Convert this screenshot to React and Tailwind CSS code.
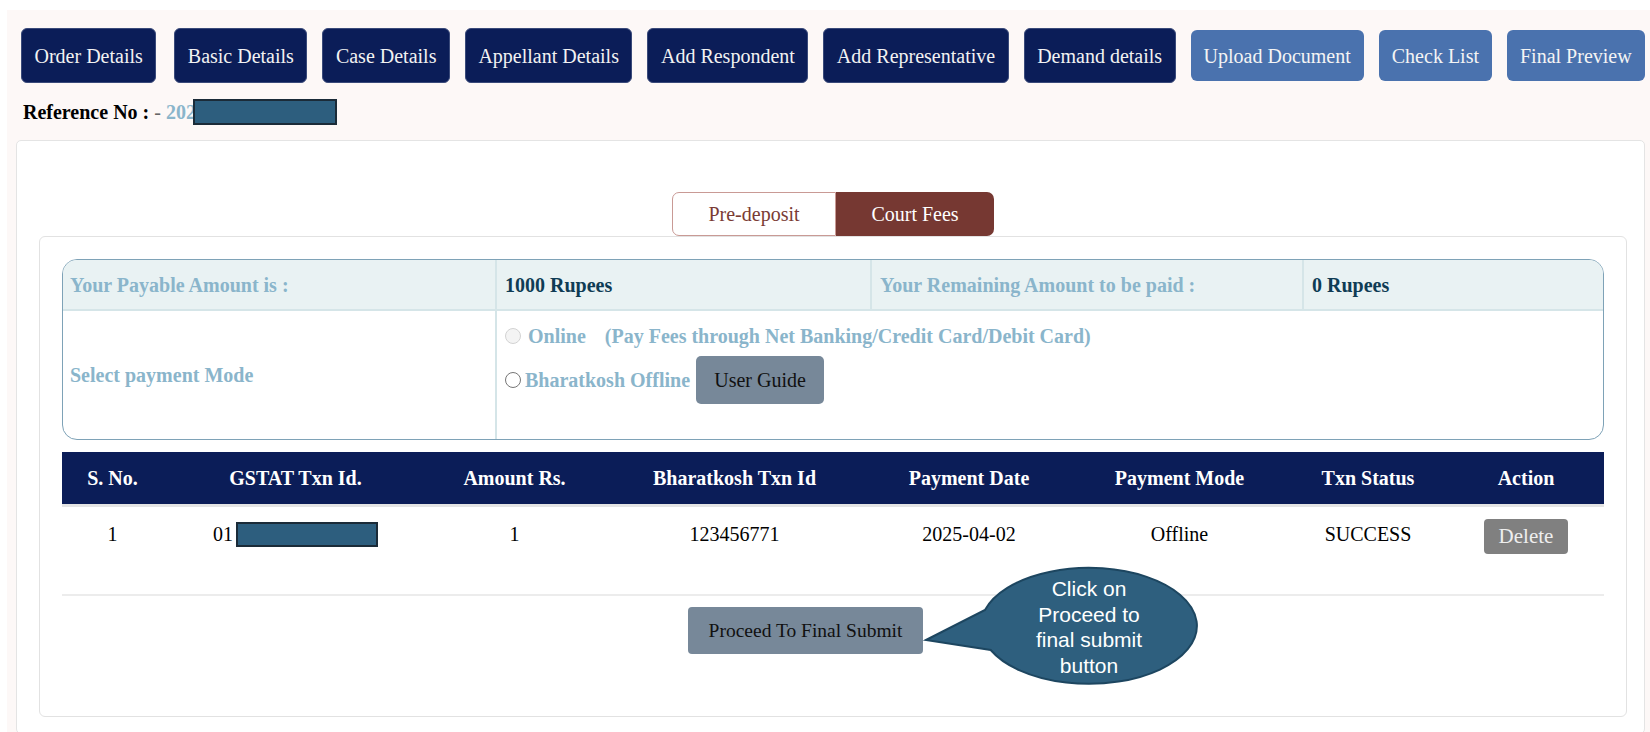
import React from "react";

const navDark = [
  "Order Details",
  "Basic Details",
  "Case Details",
  "Appellant Details",
  "Add Respondent",
  "Add Representative",
  "Demand details",
];
const navLight = ["Upload Document", "Check List", "Final Preview"];

const headers = [
  "S. No.",
  "GSTAT Txn Id.",
  "Amount Rs.",
  "Bharatkosh Txn Id",
  "Payment Date",
  "Payment Mode",
  "Txn Status",
  "Action",
];

function Redact({ w, h, className = "" }) {
  return (
    <span
      className={`inline-block bg-[#2d5e7e] border-2 border-[#1b2b38] align-middle ${className}`}
      style={{ width: w, height: h }}
    />
  );
}

export default function App() {
  return (
    <div className="min-h-screen bg-white pt-[10px] pl-[7px] font-['Liberation_Serif','Times_New_Roman',serif] text-[20px] text-black">
      <div className="bg-[#fdf8f7] pt-[18px] pl-[9px] pr-[5px] h-[722px] overflow-hidden">
        {/* Nav */}
        <div className="flex items-center gap-[15px] pl-[5px]">
          {navDark.map((t, i) => (
            <div
              key={t}
              className={`h-[55px] px-[12.5px] flex items-center rounded-[6px] bg-[#0b1d58] text-[#f2f2f2] whitespace-nowrap border border-[#3a4a7a] ${i === 1 ? "ml-[3px]" : ""}`}
            >
              {t}
            </div>
          ))}
          {navLight.map((t) => (
            <div
              key={t}
              className="h-[51px] px-[13px] flex items-center rounded-[6px] bg-[#4a72ae] text-[#f4f4f4] whitespace-nowrap"
            >
              {t}
            </div>
          ))}
        </div>

        {/* Reference */}
        <div className="mt-[13px] h-[32px] pl-[7px] flex items-center text-[20px]">
          <span className="font-bold">Reference No :</span>
          <span className="ml-[5px] text-[#666]">-</span>
          <span className="ml-[5px] font-bold text-[#8ab5cb]">202</span>
          <Redact w={144} h={26} className="-ml-[3px]" />
        </div>

        {/* Main card */}
        <div className="mt-[12px] bg-white border border-[#e4e4e4] rounded-[5px] pt-[51px] pl-[22px] pr-[17px] pb-[16px]">
          {/* Tabs */}
          <div className="flex justify-center">
            <div className="w-[164px] h-[44px] flex items-center justify-center border border-[#c99a95] rounded-l-[7px] bg-white text-[#7a3b34]">
              Pre-deposit
            </div>
            <div className="w-[158px] h-[44px] flex items-center justify-center rounded-r-[7px] bg-[#763832] text-white">
              Court Fees
            </div>
          </div>

          {/* Inner panel */}
          <div className="relative border border-[#e2e2e2] rounded-[6px] pt-[22px] px-[22px] pb-[62px]">
            {/* Info box */}
            <div className="border-[1.5px] border-[#7ea2b7] rounded-[15px] overflow-hidden">
              <div className="grid grid-cols-[434px_375px_432px_1fr] bg-[#e9f2f3] h-[51px] border-b-2 border-[#d5e5e8] font-bold">
                <div className="px-[7px] flex items-center border-r-2 border-[#d5e5e8] text-[#8ab5cb]">
                  Your Payable Amount is :
                </div>
                <div className="px-[8px] pt-[10px] border-r-2 border-[#d5e5e8] text-[#0f3c55]">
                  1000 Rupees
                </div>
                <div className="px-[8px] flex items-center border-r-2 border-[#d5e5e8] text-[#8ab5cb]">
                  Your Remaining Amount to be paid :
                </div>
                <div className="px-[8px] pt-[10px] text-[#0f3c55]">0 Rupees</div>
              </div>
              <div className="grid grid-cols-[434px_1fr] h-[128px] font-bold">
                <div className="px-[7px] flex items-center border-r-2 border-[#d5e5e8] text-[#8ab5cb]">
                  Select payment Mode
                </div>
                <div className="pl-[8px] pt-[13px]">
                  <div className="flex items-center h-[24px]">
                    <span className="w-[16px] h-[16px] rounded-full border border-[#d2d2d2] bg-[#f4f4f4]" />
                    <span className="ml-[7px] text-[#8ab5cb]">Online</span>
                    <span className="ml-[19px] text-[#8ab5cb]">
                      (Pay Fees through Net Banking/Credit Card/Debit Card)
                    </span>
                  </div>
                  <div className="flex items-center mt-[8px]">
                    <span className="w-[16px] h-[16px] rounded-full border-[1.5px] border-[#767676] bg-white" />
                    <span className="ml-[4px] text-[#8ab5cb]">Bharatkosh Offline</span>
                    <span className="ml-[6px] w-[128px] h-[48px] flex items-center justify-center rounded-[5px] bg-[#778899] text-[#111] font-normal">
                      User Guide
                    </span>
                  </div>
                </div>
              </div>
            </div>

            {/* Table */}
            <div className="mt-[12px]">
              <div className="grid grid-cols-[101px_265px_173px_267px_202px_219px_158px_158px] h-[52px] bg-[#0b1d58] text-white font-bold">
                {headers.map((h) => (
                  <div key={h} className="flex items-center justify-center whitespace-nowrap">
                    {h}
                  </div>
                ))}
              </div>
              <div className="h-[3px] bg-[#e4e4e4]" />
              <div className="grid grid-cols-[101px_265px_173px_267px_202px_219px_158px_158px] h-[89px] pt-[12px] border-b-2 border-[#ececec] items-start">
                <div className="h-[30px] flex items-center justify-center">1</div>
                <div className="h-[30px] flex items-center justify-center">
                  <span>01</span>
                  <Redact w={142} h={25} className="ml-[3px]" />
                </div>
                <div className="h-[30px] flex items-center justify-center">1</div>
                <div className="h-[30px] flex items-center justify-center">123456771</div>
                <div className="h-[30px] flex items-center justify-center">2025-04-02</div>
                <div className="h-[30px] flex items-center justify-center">Offline</div>
                <div className="h-[30px] flex items-center justify-center">SUCCESS</div>
                <div className="flex justify-center">
                  <span className="w-[84px] h-[35px] flex items-center justify-center rounded-[4px] bg-[#808080] text-[#eeeeee] text-[21px]">
                    Delete
                  </span>
                </div>
              </div>
            </div>

            {/* Proceed */}
            <div className="pt-[11px]">
              <div className="ml-[626px] w-[235px] h-[47px] flex items-center justify-center rounded-[4px] bg-[#778899] text-[#111] text-[19.5px]">
                Proceed To Final Submit
              </div>
            </div>

            {/* Callout */}
            <svg
              className="absolute left-[875px] top-[321px]"
              width="290"
              height="135"
              viewBox="0 0 290 135"
            >
              <path
                d="M11 82 L70 52 A108 58 0 1 1 75.7 92 Z"
                fill="#2e5f7e"
                stroke="#1d4660"
                strokeWidth="2"
                strokeLinejoin="miter"
              />
            </svg>
            <div className="absolute left-[939px] top-[339px] w-[220px] text-center text-white text-[21px] leading-[25.5px] font-['Liberation_Sans',Arial,sans-serif]">
              Click on
              <br />
              Proceed to
              <br />
              final submit
              <br />
              button
            </div>
          </div>
        </div>
      </div>
    </div>
  );
}
